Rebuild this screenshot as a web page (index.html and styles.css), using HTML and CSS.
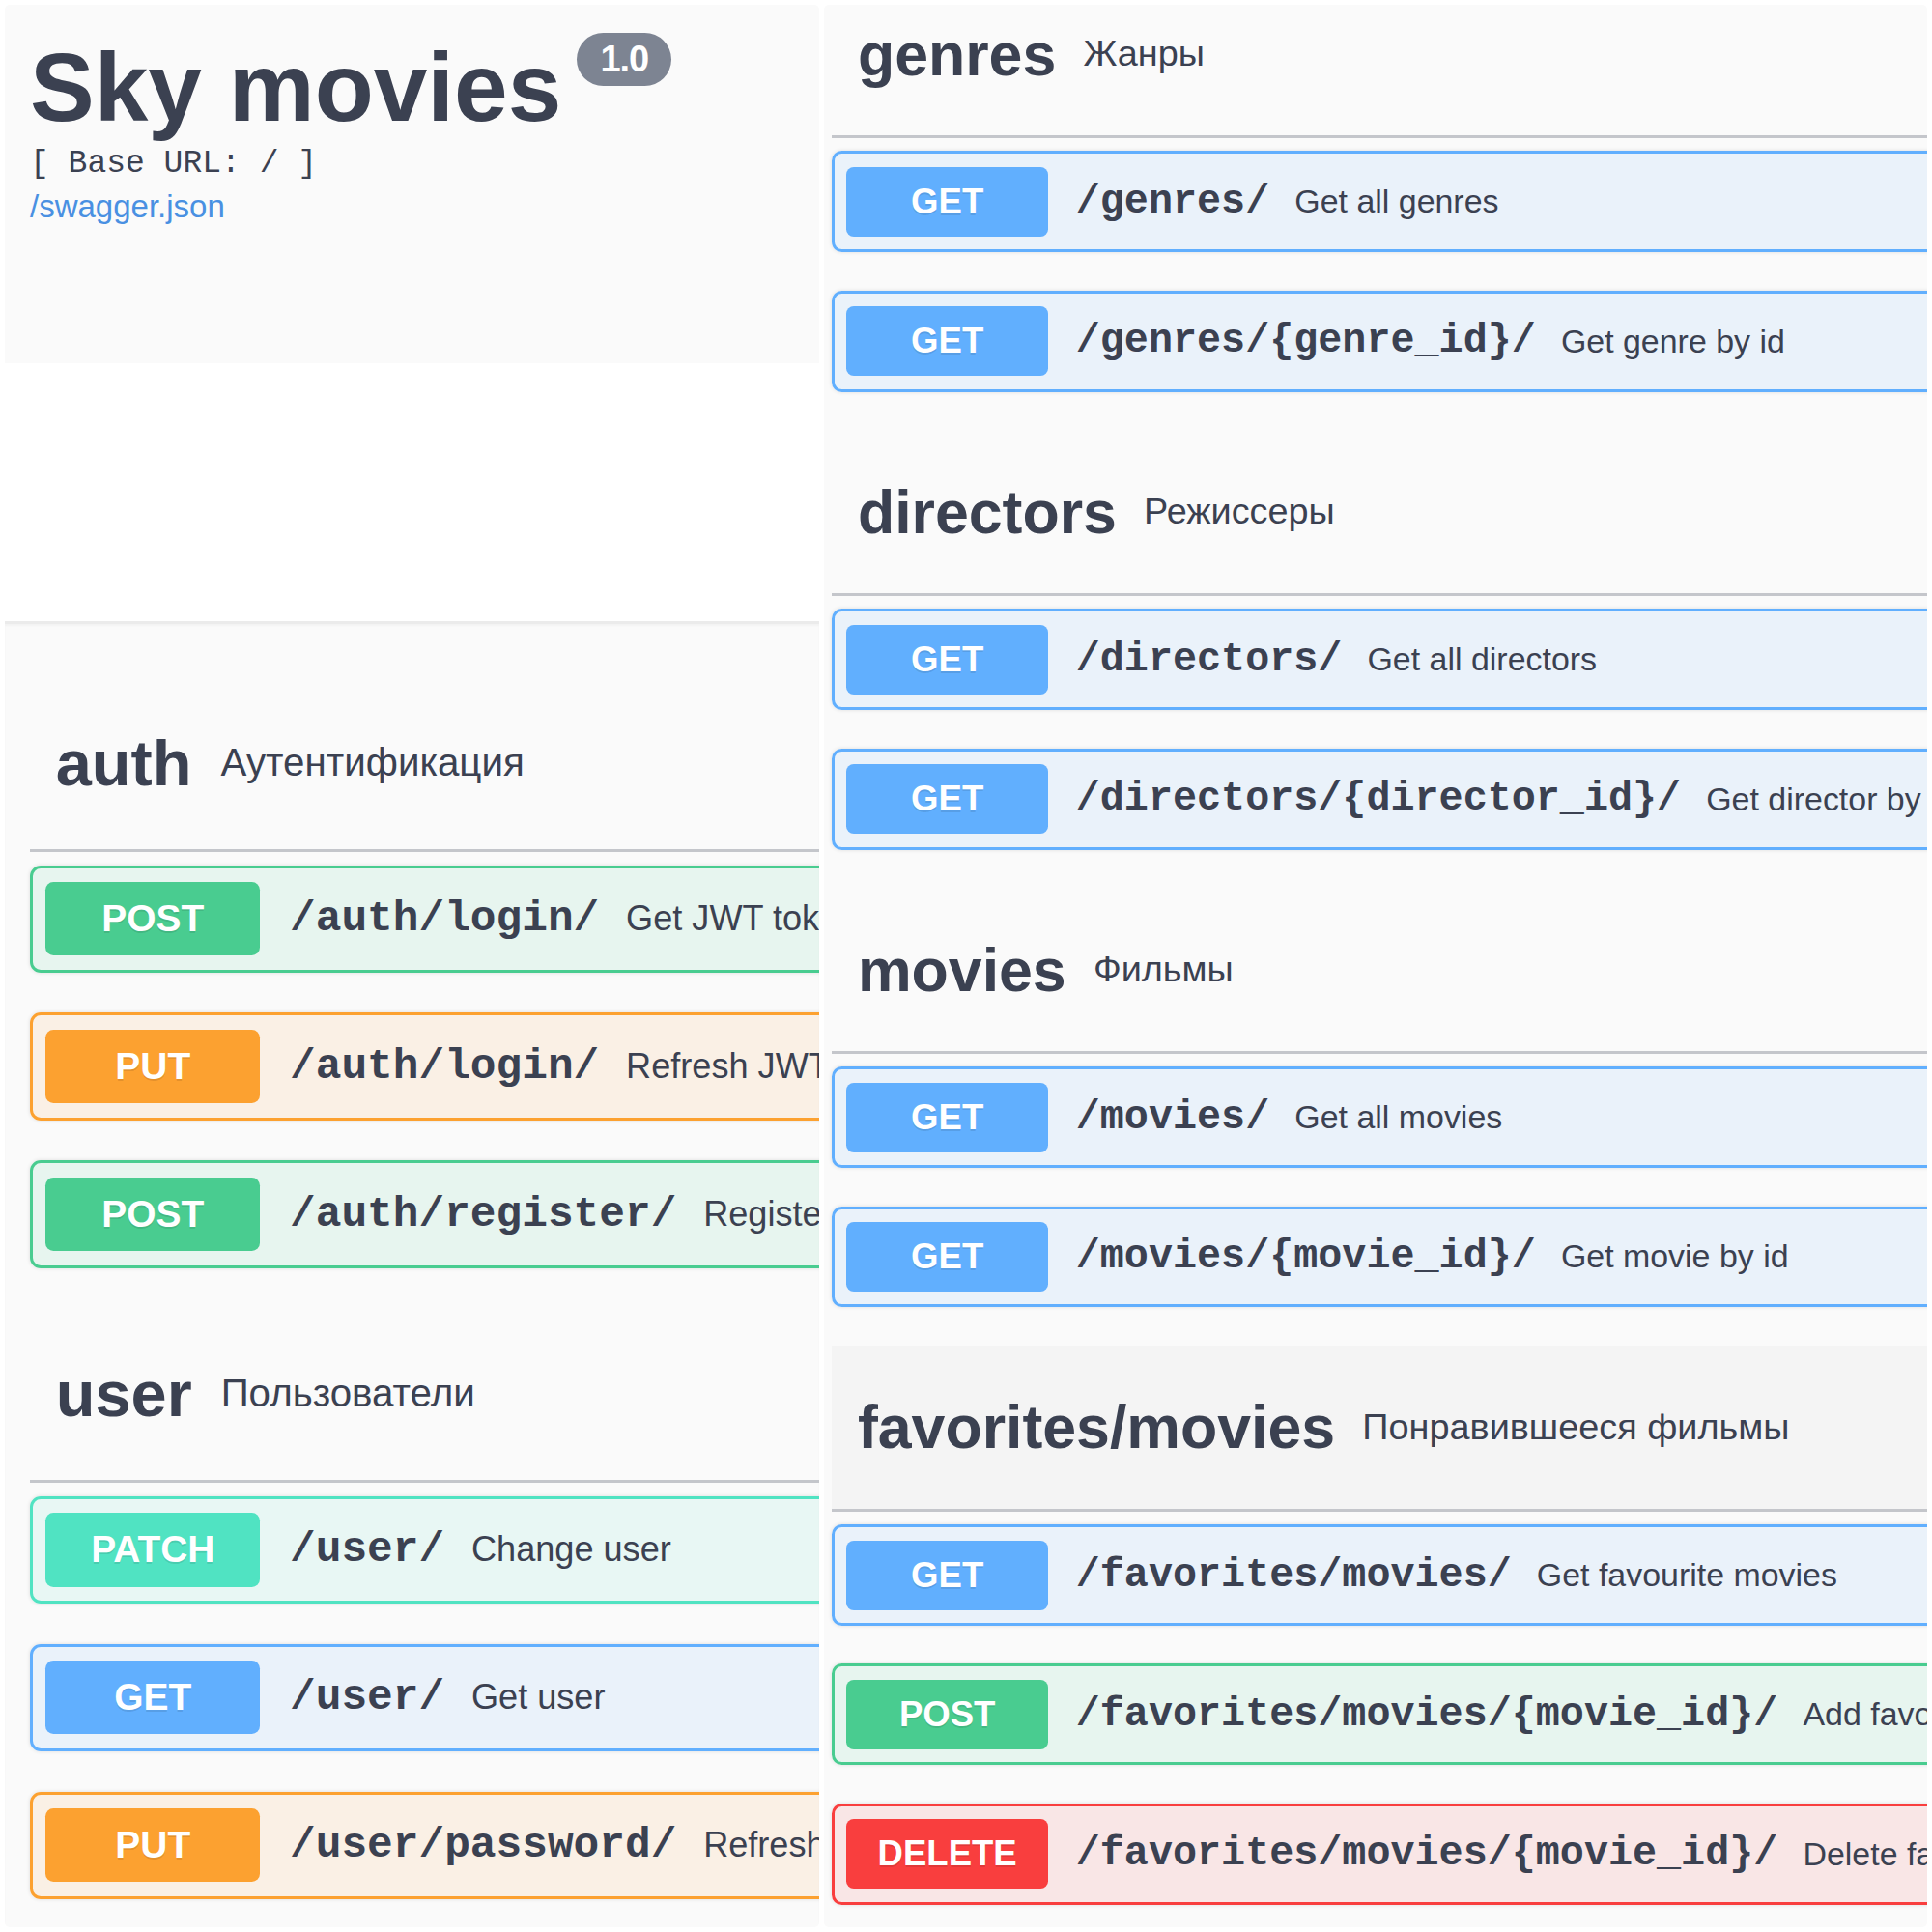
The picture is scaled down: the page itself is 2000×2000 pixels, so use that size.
FILE: index.html
```html
<!DOCTYPE html>
<html lang="ru">
<head>
<meta charset="utf-8">
<title>Sky movies</title>
<link rel="stylesheet" href="styles.css">
</head>
<body>
<div class="page">
  <div class="panel panel-left">
    <div class="info">
      <div class="title-row">
        <h2 class="title">Sky movies</h2>
        <span class="version">1.0</span>
      </div>
      <div class="base-url">[ Base URL: / ]</div>
      <a class="spec-link" href="#">/swagger.json</a>
    </div>
    <div class="tags tags-left">
      <div class="inner">
        <div class="tag"><span class="tag-name">auth</span><span class="tag-desc">Аутентификация</span></div>
        <div class="op op-post"><span class="method">POST</span><span class="path">/auth/login/</span><span class="desc">Get JWT token</span></div>
        <div class="op op-put"><span class="method">PUT</span><span class="path">/auth/login/</span><span class="desc">Refresh JWT token</span></div>
        <div class="op op-post"><span class="method">POST</span><span class="path">/auth/register/</span><span class="desc">Register user</span></div>

        <div class="tag"><span class="tag-name">user</span><span class="tag-desc">Пользователи</span></div>
        <div class="op op-patch"><span class="method">PATCH</span><span class="path">/user/</span><span class="desc">Change user</span></div>
        <div class="op op-get"><span class="method">GET</span><span class="path">/user/</span><span class="desc">Get user</span></div>
        <div class="op op-put"><span class="method">PUT</span><span class="path">/user/password/</span><span class="desc">Refresh password</span></div>
      </div>
    </div>
  </div>

  <div class="panel panel-right">
    <div class="inner">
      <div class="tag"><span class="tag-name">genres</span><span class="tag-desc">Жанры</span></div>
      <div class="op op-get"><span class="method">GET</span><span class="path">/genres/</span><span class="desc">Get all genres</span></div>
      <div class="op op-get"><span class="method">GET</span><span class="path">/genres/{genre_id}/</span><span class="desc">Get genre by id</span></div>

      <div class="tag"><span class="tag-name">directors</span><span class="tag-desc">Режиссеры</span></div>
      <div class="op op-get"><span class="method">GET</span><span class="path">/directors/</span><span class="desc">Get all directors</span></div>
      <div class="op op-get"><span class="method">GET</span><span class="path">/directors/{director_id}/</span><span class="desc">Get director by id</span></div>

      <div class="tag"><span class="tag-name">movies</span><span class="tag-desc">Фильмы</span></div>
      <div class="op op-get"><span class="method">GET</span><span class="path">/movies/</span><span class="desc">Get all movies</span></div>
      <div class="op op-get"><span class="method">GET</span><span class="path">/movies/{movie_id}/</span><span class="desc">Get movie by id</span></div>

      <div class="tag tag-hover"><span class="tag-name">favorites/movies</span><span class="tag-desc">Понравившееся фильмы</span></div>
      <div class="op op-get"><span class="method">GET</span><span class="path">/favorites/movies/</span><span class="desc">Get favourite movies</span></div>
      <div class="op op-post"><span class="method">POST</span><span class="path">/favorites/movies/{movie_id}/</span><span class="desc">Add favourite movie</span></div>
      <div class="op op-delete"><span class="method">DELETE</span><span class="path">/favorites/movies/{movie_id}/</span><span class="desc">Delete favourite movie</span></div>
    </div>
  </div>
</div>
</body>
</html>
```

FILE: styles.css
```css
* { box-sizing: border-box; }

html, body {
  margin: 0;
  padding: 0;
  background: #ffffff;
}

body {
  font-family: "Liberation Sans", Arial, Helvetica, sans-serif;
  color: #3b4151;
}

.page {
  display: flex;
  gap: 5px;
  padding: 5px;
  width: 2000px;
  height: 2000px;
}

.panel {
  border-radius: 5px;
  overflow: hidden;
  flex: none;
}

.panel-left {
  --s: 2.78;
  --op-h: 40px;
  --op-gap: 15px;
  --tag-h: 65px;
  --tag-pl: 9.6px;
  width: 843px;
  display: flex;
  flex-direction: column;
  background: #ffffff;
}

.panel-right {
  --s: 2.61;
  --op-h: 40.2px;
  --op-gap: 15.1px;
  --tag-h: 66px;
  --tag-pl: 10.3px;
  width: 1142px;
  background: #fafafa;
}

/* ---------- info block ---------- */
.info {
  height: 371px;
  flex: none;
  background: #fafafa;
  padding: 29px 26px 0;
}

.title-row {
  display: flex;
  align-items: flex-start;
}

.title {
  margin: 6px 0 0;
  font-size: 100px;
  line-height: 100px;
  font-weight: 700;
  color: #3b4151;
}

.version {
  margin-left: 16px;
  width: 98px;
  height: 55px;
  border-radius: 28px;
  background: #7d8492;
  color: #ffffff;
  font-size: 38px;
  font-weight: 700;
  letter-spacing: -1px;
  display: flex;
  align-items: center;
  justify-content: center;
}

.base-url {
  margin-top: 10px;
  font-family: "Liberation Mono", "Courier New", monospace;
  font-size: 33px;
  line-height: 40px;
  color: #3b4151;
}

.spec-link {
  display: block;
  margin-top: 4px;
  font-size: 33px;
  line-height: 40px;
  color: #4990e2;
  text-decoration: none;
}

/* ---------- tag sections ---------- */
.tags-left {
  margin-top: 267px;
  flex: 1;
  background: #fafafa;
  border-top: 3px solid #ebebeb;
  box-shadow: inset 0 2px 2px rgba(0,0,0,0.03);
}

.tags-left .inner {
  width: 1400px;
  padding: 55px 0 0 26px;
}

.panel-right .inner {
  width: 1400px;
  margin-top: -34px;
  padding-left: 8px;
}

.tag {
  display: flex;
  align-items: center;
  height: calc(var(--s) * var(--tag-h));
  padding-left: calc(var(--s) * var(--tag-pl));
  border-bottom: 3px solid #c4c6cb;
  margin-bottom: calc(var(--s) * 5px);
  white-space: nowrap;
}

.tag-hover {
  background: #f4f4f4;
}

.tag-name {
  font-size: calc(var(--s) * 24px);
  font-weight: 700;
  color: #3b4151;
}

.tag-desc {
  font-size: calc(var(--s) * 14.5px);
  padding-left: calc(var(--s) * 10.8px);
  color: #3b4151;
}

/* ---------- operations ---------- */
.op {
  display: flex;
  align-items: center;
  height: calc(var(--s) * var(--op-h));
  margin-bottom: calc(var(--s) * var(--op-gap));
  padding-left: calc(var(--s) * 4.7px);
  border: 3px solid;
  border-radius: calc(var(--s) * 4px);
  box-shadow: 0 0 4px rgba(0,0,0,0.12);
  white-space: nowrap;
}

.method {
  flex: none;
  width: calc(var(--s) * 80px);
  height: calc(var(--s) * 27.5px);
  border-radius: calc(var(--s) * 3px);
  color: #ffffff;
  font-size: calc(var(--s) * 14px);
  font-weight: 700;
  text-shadow: 0 2px 0 rgba(0,0,0,0.1);
  display: flex;
  align-items: center;
  justify-content: center;
}

.path {
  font-family: "Liberation Mono", "Courier New", monospace;
  font-weight: 700;
  font-size: calc(var(--s) * 16px);
  padding: 0 calc(var(--s) * 10px) 0 calc(var(--s) * 11px);
  color: #3b4151;
}

.desc {
  font-size: calc(var(--s) * 13px);
  color: #3b4151;
}

.op-get { border-color: #61affe; background: rgba(97,175,254,0.1); }
.op-get .method { background: #61affe; }

.op-post { border-color: #49cc90; background: rgba(73,204,144,0.1); }
.op-post .method { background: #49cc90; }

.op-put { border-color: #fca130; background: rgba(252,161,48,0.1); }
.op-put .method { background: #fca130; }

.op-patch { border-color: #50e3c2; background: rgba(80,227,194,0.1); }
.op-patch .method { background: #50e3c2; }

.op-delete { border-color: #f93e3e; background: rgba(249,62,62,0.1); }
.op-delete .method { background: #f93e3e; }
```
